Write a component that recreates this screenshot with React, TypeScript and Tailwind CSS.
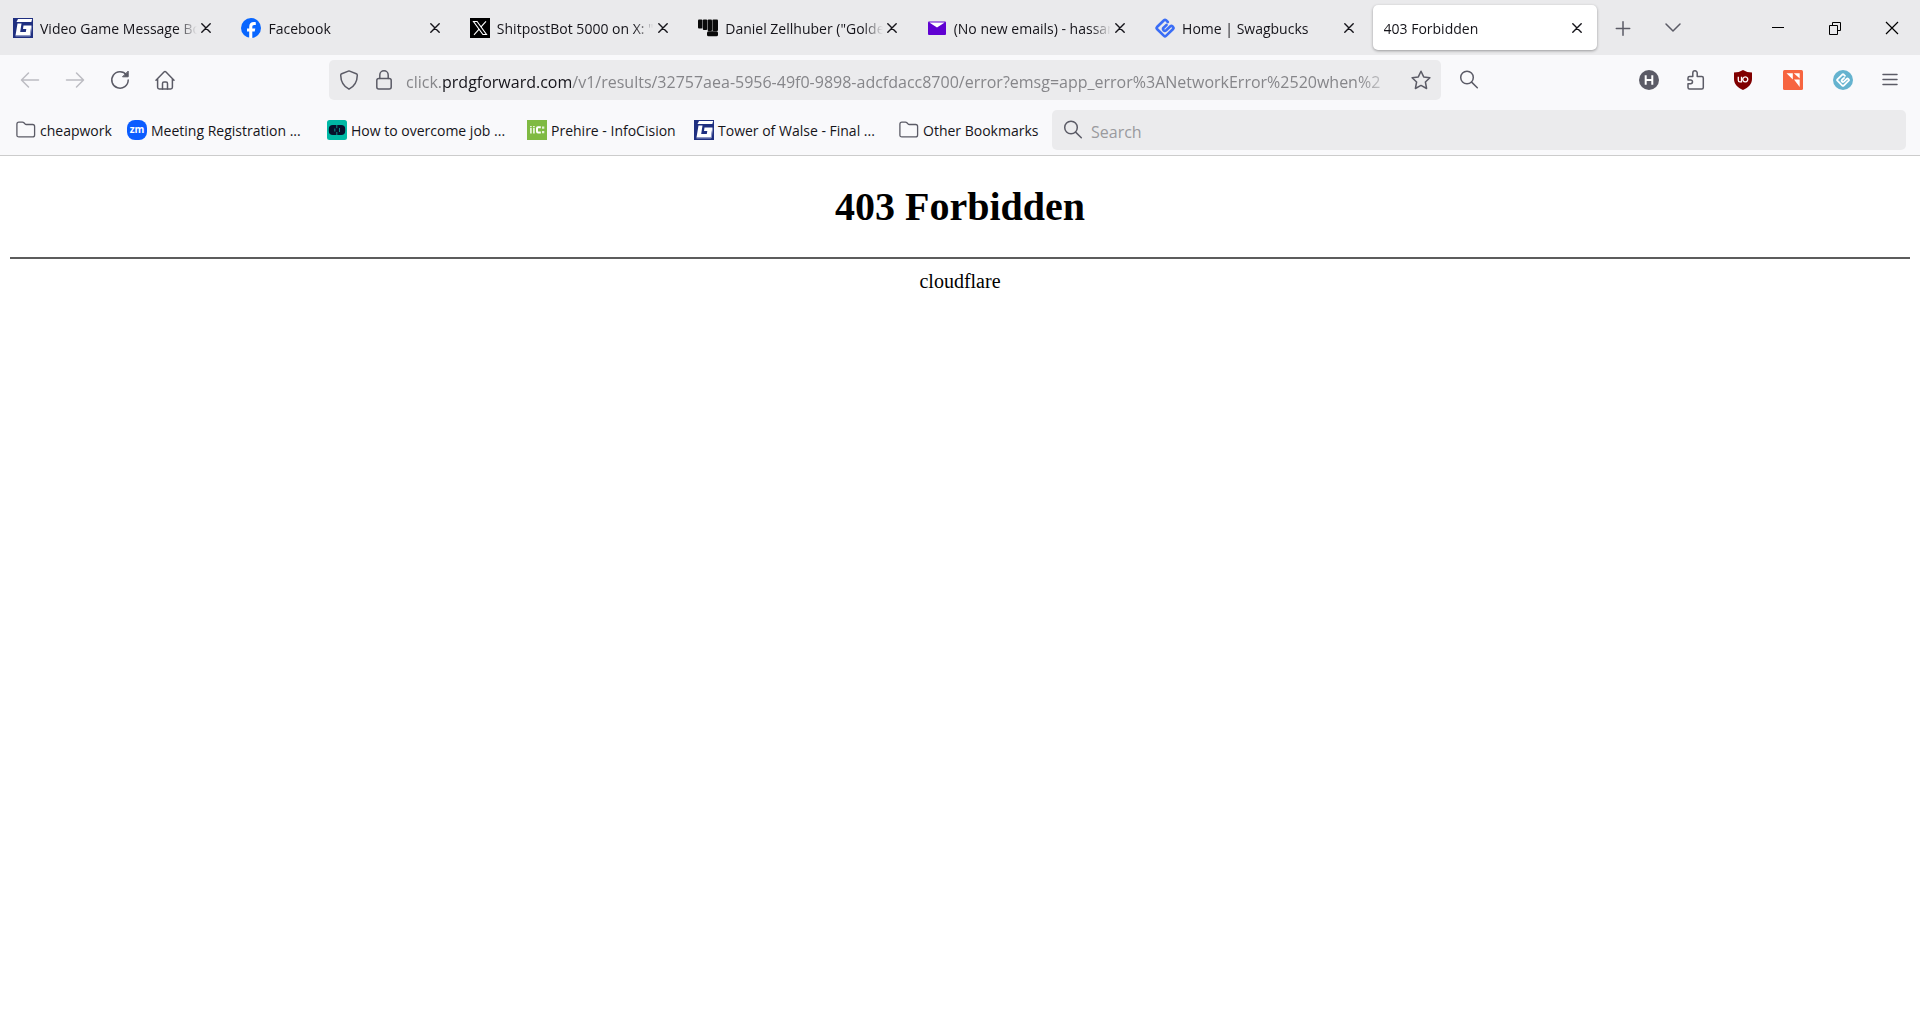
import type { ReactNode } from 'react';

type IconProps = { className?: string };

const uiFont = "font-['Segoe_UI','Open_Sans',sans-serif]";

/* ---------- site icons ---------- */

function GameFaqsIcon() {
  return (
    <svg viewBox="0 0 20 20" className="size-5 shrink-0">
      <rect width="20" height="20" fill="#1f2f80" />
      <path d="M5 1h14.200l-.9 3H3.500z" fill="#fff" />
      <path d="M4.500 5.500h4L7.200 14h5.600l.5-3H10l.5-3.500h8L17 17.500H2.500z" fill="#fff" />
      <path d="M2.500 18h14.700l1.500-10" fill="none" stroke="#8f99c6" strokeWidth="1" />
    </svg>
  );
}

function FacebookIcon() {
  return (
    <svg viewBox="0 0 20 20" className="size-5 shrink-0">
      <circle cx="10" cy="10" r="10" fill="#0866ff" />
      <path d="M8.200 20v-6.600H6v-3h2.200V9c0-3.400 1.500-5 4.800-5 .6 0 1.300.1 1.800.2V7h-1.500c-1.500 0-2 .7-2 2v1.400h3l-.6 3h-2.400V20z" fill="#fff" />
    </svg>
  );
}

function XIcon() {
  return (
    <svg viewBox="0 0 20 20" className="size-5 shrink-0">
      <rect width="20" height="20" fill="#000" />
      <path d="M3.500 3.500h3.600l9.400 13h-3.600z" fill="none" stroke="#fff" strokeWidth="1.100" />
      <path d="M16 3.300l-5.200 5.900M9.100 11.200L4 16.800" stroke="#fff" strokeWidth="1.100" />
    </svg>
  );
}

function FistIcon() {
  return (
    <svg viewBox="0 0 20 20" className="size-5 shrink-0" fill="#0a0a0a">
      <rect x="0" y="1.500" width="4.400" height="9" rx="1" />
      <rect x="4.800" y="1.500" width="4.400" height="10.500" rx="1" />
      <rect x="9.600" y="1.500" width="4.400" height="11.500" rx="1" />
      <rect x="14.400" y="1.500" width="5.600" height="11.500" rx="1" />
      <rect x="9" y="13.300" width="11" height="5" rx="1.500" />
    </svg>
  );
}

function MailIcon() {
  return (
    <svg viewBox="0 0 20 20" className="size-5 shrink-0">
      <rect x="1" y="3.500" width="18" height="13.500" rx="1" fill="#6001d2" />
      <path d="M2.300 4.500h15.400L10 9.500z" fill="#fff" />
    </svg>
  );
}

function SwagbucksIcon({ className = 'size-5 shrink-0 text-[#3b6ef6]' }: IconProps) {
  return (
    <svg viewBox="0 0 20 20" className={className} fill="none" stroke="currentColor" strokeWidth="2.600" strokeLinecap="round" strokeLinejoin="round">
      <path d="M12.800 4L11 2.200q-1-.9-2 0L2 9q-.9 1 0 2L9 17.900q1 .9 2 0L18.100 11q.9-1 0-2l-.7-.7q-1-.9-2 0L11.200 12.300q-1.400 1.200-2.600 0t0-2.600L11.500 7" />
    </svg>
  );
}

function ZoomIcon() {
  return (
    <svg viewBox="0 0 20 20" className="size-5 shrink-0">
      <rect width="20" height="20" rx="8" fill="#0b5cff" />
      <text x="10" y="13" fontSize="10" fontWeight="700" fill="#fff" textAnchor="middle" fontFamily="Open Sans, sans-serif">zm</text>
    </svg>
  );
}

function CareerIcon() {
  return (
    <svg viewBox="0 0 20 20" className="size-5 shrink-0">
      <rect width="20" height="20" rx="2.500" fill="#00b8a5" />
      <rect x="1.800" y="5" width="16.400" height="10" rx="4" fill="#06102c" />
      <path d="M9.800 5v3.200M9.800 12v3M7.800 8.500v3M12.500 8v4" stroke="#0a8f88" strokeWidth="1" />
    </svg>
  );
}

function InfoCisionIcon() {
  return (
    <svg viewBox="0 0 20 20" className="size-5 shrink-0">
      <rect width="20" height="20" fill="#7fba42" />
      <path d="M3 8h1.800v5.500H3zM6 8h1.800v5.500H6zM3 6h1.800v1.300H3zM6 6h1.800v1.300H6z" fill="#e4f2d6" />
      <path d="M13.800 7.300H11q-1 0-1 1v3.200q0 1 1 1h2.800" fill="none" stroke="#fff" strokeWidth="2" />
      <path d="M15 6.500h2.300v2.300H15zM15 11h2.300v2.300H15z" fill="#e4f2d6" />
    </svg>
  );
}

function FolderIcon() {
  return (
    <svg viewBox="0 0 20 20" className="size-5 shrink-0" fill="none" stroke="#5b5b66" strokeWidth="1.300" strokeLinejoin="round">
      <path d="M.9 4.200q0-2 2-2h3.600q.8 0 1.400.6l1 1q.6.7 1.500.7h6.200q2 0 2 2v8.400q0 2-2 2H2.900q-2 0-2-2z" />
    </svg>
  );
}

/* ---------- browser icons ---------- */

function CloseIcon() {
  return (
    <svg viewBox="0 0 10 10" className="size-[10px]" stroke="#15141a" strokeWidth="1.400" strokeLinecap="round">
      <path d="M.8.8l8.400 8.400M9.200.8L.8 9.200" />
    </svg>
  );
}

function ToolIcon({ className = 'size-5', children }: { className?: string; children: ReactNode }) {
  return (
    <svg viewBox="0 0 20 20" className={className} fill="none" stroke="currentColor" strokeWidth="1.500" strokeLinecap="round" strokeLinejoin="round">
      {children}
    </svg>
  );
}

function SearchIcon() {
  return (
    <ToolIcon>
      <circle cx="8" cy="7.500" r="6.300" />
      <path d="M12.600 12.100l5.700 5.700" />
    </ToolIcon>
  );
}

const tabs = [
  { title: 'Video Game Message Board', icon: <GameFaqsIcon /> },
  { title: 'Facebook', icon: <FacebookIcon /> },
  { title: 'ShitpostBot 5000 on X: "', icon: <XIcon /> },
  { title: 'Daniel Zellhuber ("Golden', icon: <FistIcon /> },
  { title: '(No new emails) - hassan', icon: <MailIcon /> },
  { title: 'Home | Swagbucks', icon: <SwagbucksIcon /> },
  { title: '403 Forbidden', active: true },
];

const bookmarks = [
  { title: 'cheapwork', icon: <FolderIcon />, width: 'w-[111px]' },
  { title: 'Meeting Registration ...', icon: <ZoomIcon />, width: 'w-[200px]' },
  { title: 'How to overcome job ...', icon: <CareerIcon />, width: 'w-[200px]' },
  { title: 'Prehire - InfoCision', icon: <InfoCisionIcon />, width: 'w-[167px]' },
  { title: 'Tower of Walse - Final ...', icon: <GameFaqsIcon />, width: 'w-[205px]' },
  { title: 'Other Bookmarks', icon: <FolderIcon />, width: 'w-[153px]' },
];

function TabStrip() {
  return (
    <header className="flex h-[55px] items-center bg-[#eaeaec]">
      <div role="tablist" className="flex min-w-0 flex-1">
        {tabs.map((tab) => (
          <div key={tab.title} className="min-w-0 flex-1 px-[2px]">
            <div
              className={`flex h-[45px] items-center gap-[7px] rounded-[5px] pr-3 ${
                tab.active ? 'bg-white pl-[11px] shadow-[0_1px_3px_rgba(0,0,0,0.35)]' : 'pl-[11px]'
              }`}
            >
              {tab.icon}
              <button
                role="tab"
                aria-selected={!!tab.active}
                className="min-w-0 flex-1 overflow-hidden whitespace-nowrap pt-[2px] text-left text-sm [mask-image:linear-gradient(to_left,transparent,black_20px)]"
              >
                {tab.title}
              </button>
              <button aria-label={`Close ${tab.title}`} className="-ml-[6px] flex w-4 shrink-0 justify-center">
                <CloseIcon />
              </button>
            </div>
          </div>
        ))}
      </div>
      <div className="flex w-[321px] shrink-0 items-center text-[#5b5b66]">
        <button aria-label="New tab" className="flex w-12 justify-center">
          <ToolIcon><path d="M10 3.800v13.400M3.300 10.500h13.400" /></ToolIcon>
        </button>
        <button aria-label="List all tabs" className="flex w-[52px] justify-center">
          <ToolIcon><path d="M3 6l7 7 7-7" /></ToolIcon>
        </button>
        <div className="ml-auto flex text-black">
          <button aria-label="Minimize" className="flex w-[57px] justify-center">
            <svg viewBox="0 0 14 14" className="size-[14px]" stroke="currentColor"><path d="M1 6.500h12" /></svg>
          </button>
          <button aria-label="Restore" className="flex w-[57px] justify-center">
            <svg viewBox="0 0 14 14" className="size-[14px]" fill="none" stroke="currentColor">
              <path d="M1.500 4.500h8v9h-8zM4.500 4.500v-3h8v8h-3" />
            </svg>
          </button>
          <button aria-label="Close window" className="flex w-[57px] justify-center">
            <svg viewBox="0 0 14 14" className="size-[14px]" stroke="currentColor" strokeWidth="1.200"><path d="M1 1l12 12M13 1L1 13" /></svg>
          </button>
        </div>
      </div>
    </header>
  );
}

function Toolbar() {
  return (
    <nav className="flex h-[50px] items-center pr-5 text-[#5b5b66]">
      <div className="flex w-[329px] shrink-0 gap-[25px] pl-5">
        <button aria-label="Back" disabled className="text-[#bcbcc2]">
          <ToolIcon><path d="M18.500 10H2M8.500 3L1.500 10l7 7" /></ToolIcon>
        </button>
        <button aria-label="Forward" disabled className="text-[#bcbcc2]">
          <ToolIcon><path d="M1.500 10H18M11.500 3l7 7-7 7" /></ToolIcon>
        </button>
        <button aria-label="Reload">
          <ToolIcon>
            <path d="M16.500 5A8.200 8.200 0 1 0 18.200 10" />
            <path d="M18.200 1.500v5.300h-5.300z" fill="currentColor" strokeWidth="1" />
          </ToolIcon>
        </button>
        <button aria-label="Home">
          <ToolIcon>
            <path d="M1 10.300L9 2q1-.9 2 0l8 8.300M2.600 9v8.300q0 1.700 1.700 1.700h11.400q1.700 0 1.700-1.700V9" />
            <path d="M7.500 19v-5.500q0-1.500 1.500-1.500h2q1.500 0 1.500 1.500V19" />
          </ToolIcon>
        </button>
      </div>

      <div className="flex h-10 min-w-0 flex-1 items-center rounded-[5px] bg-[#ebebed] px-[10px]">
        <button aria-label="Tracking protection" className="mr-[15px] shrink-0">
          <ToolIcon><path d="M10 .9l7.300 2.800q1 .4 1 1.500C18.200 11 16 16 10 19.200 4 16 1.800 11 1.700 5.200q0-1.100 1-1.500z" /></ToolIcon>
        </button>
        <button aria-label="Site information" className="mr-3 shrink-0">
          <ToolIcon>
            <rect x="2.800" y="8.500" width="14.400" height="10.500" rx="2" />
            <path d="M5.800 8.500V5a4.200 4.200 0 0 1 8.400 0v3.500" />
          </ToolIcon>
        </button>
        <div className="min-w-0 flex-1 overflow-hidden whitespace-nowrap pt-[3px] text-base text-[#86868a] [mask-image:linear-gradient(to_left,transparent_8px,black_44px)]">
          click.<span className="text-[#15141a]">prdgforward.com</span>/v1/results/32757aea-5956-49f0-9898-adcfdacc8700/error?emsg=app_error%3ANetworkError%2520when%2
        </div>
        <button aria-label="Bookmark this page" className="ml-2 shrink-0">
          <ToolIcon><path d="M10 1.200l2.700 5.700 6.200.8-4.500 4.300 1.200 6.500-5.600-3.100-5.600 3.100 1.200-6.500L1.100 7.700l6.200-.8z" /></ToolIcon>
        </button>
      </div>

      <button aria-label="Search" className="ml-[18px] shrink-0"><SearchIcon /></button>

      <div className="ml-40 flex shrink-0 items-center gap-[27px]">
        <button aria-label="H extension">
          <svg viewBox="0 0 20 20" className="size-5">
            <circle cx="10" cy="10" r="10" fill="#5b5b66" />
            <path d="M6.700 5.200v9.600M13.300 5.200v9.600M6.700 10h6.600" stroke="#fff" strokeWidth="2" />
          </svg>
        </button>
        <button aria-label="Extensions">
          <ToolIcon>
            <path d="M2 17.500v-3.800h2.600a1.900 1.900 0 0 0 0-3.800H2V8q0-1.500 1.500-1.500h3.300V3a2.200 2.200 0 0 1 4.400 0v3.500h4.600q1.500 0 1.500 1.500v9.500q0 1.500-1.500 1.500H3.500Q2 19 2 17.500z" />
          </ToolIcon>
        </button>
        <button aria-label="uBlock Origin">
          <svg viewBox="0 0 20 20" className="size-5">
            <path d="M10 0q4 2.500 9 2.500V9c0 5-3.500 8.500-9 11C4.500 17.500 1 14 1 9V2.500Q6 2.500 10 0z" fill="#800000" />
            <path d="M5.300 6.800v3.400q0 1.600 1.600 1.600h1.600V6.800M12.300 6.800a2.500 2.500 0 1 0 .01 0z" fill="none" stroke="#fff" strokeWidth="1.300" />
          </svg>
        </button>
        <button aria-label="Shopping assistant" className="ml-[3px]">
          <svg viewBox="0 0 20 20" className="size-5">
            <rect width="20" height="20" rx="1.500" fill="#f76540" />
            <path d="M3.500 3.300h6.300v6.200zM10.800 3.300l5.900 5.200V3.300zM11 9.500h5.700V17z" fill="#fff" />
          </svg>
        </button>
        <button aria-label="SwagButton" className="ml-[3px]">
          <span className="flex size-5 items-center justify-center rounded-full bg-[#65b3cf]">
            <SwagbucksIcon className="size-[14px] text-white" />
          </span>
        </button>
        <button aria-label="Open menu">
          <ToolIcon><path d="M3 4.500h14M3 9.500h14M3 14.500h14" /></ToolIcon>
        </button>
      </div>
    </nav>
  );
}

function BookmarksBar() {
  return (
    <div className="flex h-[50px] items-center pr-[14px] pl-4">
      {bookmarks.map(({ title, icon, width }) => (
        <a key={title} href="#" className={`flex shrink-0 items-center gap-1 whitespace-nowrap text-sm ${width}`}>
          {icon}
          <span className="pt-[2px]">{title}</span>
        </a>
      ))}
      <label className="flex h-10 min-w-0 flex-1 items-center gap-2 rounded-[5px] bg-[#ebebed] px-[11px] text-[#5b5b66]">
        <SearchIcon />
        <input
          type="search"
          aria-label="Search"
          placeholder="Search"
          className="min-w-0 flex-1 bg-transparent pt-[3px] text-base outline-none placeholder:text-[#9a9a9e]"
        />
      </label>
    </div>
  );
}

export default function App() {
  return (
    <div className="min-h-screen bg-white">
      <div className={`border-b border-[#cccccc] bg-[#f9f9fb] text-[#15141a] ${uiFont}`}>
        <TabStrip />
        <Toolbar />
        <BookmarksBar />
      </div>
      <main className="px-[10px] pt-7 text-center font-['Liberation_Serif',serif] text-black">
        <h1 className="text-[40px] leading-[46px] font-bold">403 Forbidden</h1>
        <hr className="mt-[27px] mb-[10px] border-t-2 border-[#5c5c5c]" />
        <p className="text-xl leading-6">cloudflare</p>
      </main>
    </div>
  );
}
